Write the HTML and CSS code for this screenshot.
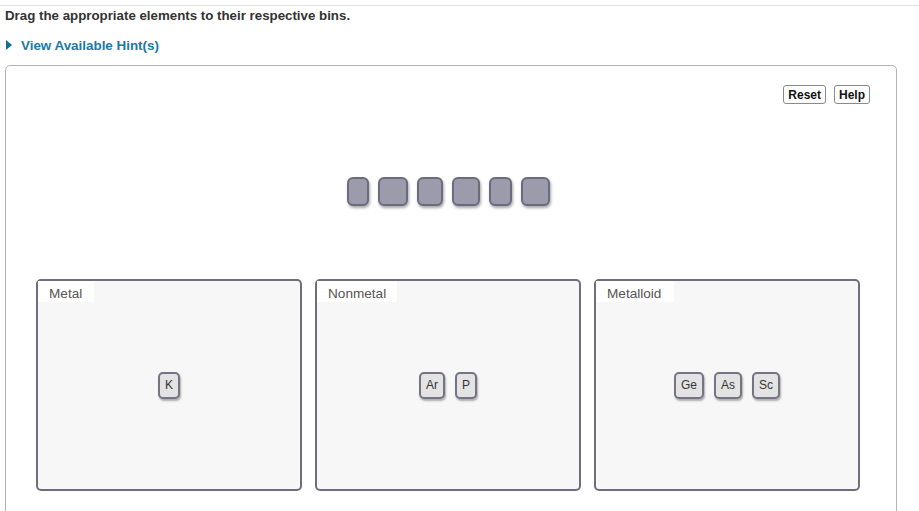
FILE: index.html
```html
<!DOCTYPE html>
<html>
<head>
<meta charset="utf-8">
<link rel="stylesheet" href="styles.css">
</head>
<body>
<div class="page">
  <div class="prompt">Drag the appropriate elements to their respective bins.</div>
  <div class="hint"><span class="tri"></span><span class="hint-text">View Available Hint(s)</span></div>
  <div class="panel">
    <div class="toolbar">
      <button class="btn">Reset</button>
      <button class="btn">Help</button>
    </div>
    <div class="tiles">
      <div class="tile w22"></div>
      <div class="tile w30"></div>
      <div class="tile w26"></div>
      <div class="tile w28"></div>
      <div class="tile w23"></div>
      <div class="tile w29"></div>
    </div>
    <div class="bins">
      <div class="bin">
        <div class="bin-label">Metal</div>
        <div class="chips"><span class="chip">K</span></div>
      </div>
      <div class="bin">
        <div class="bin-label">Nonmetal</div>
        <div class="chips"><span class="chip">Ar</span><span class="chip">P</span></div>
      </div>
      <div class="bin">
        <div class="bin-label">Metalloid</div>
        <div class="chips"><span class="chip">Ge</span><span class="chip">As</span><span class="chip">Sc</span></div>
      </div>
    </div>
  </div>
</div>
</body>
</html>
```
FILE: styles.css
```css
html, body {
  margin: 0;
  padding: 0;
  background: #fff;
  font-family: "Liberation Sans", Arial, sans-serif;
  overflow: hidden;
}
.page {
  margin-top: 5px;
  border-top: 1px solid #e2e2e2;
  height: 600px;
}
.prompt {
  padding-left: 5px;
  padding-top: 2px;
  font-size: 13.3px;
  font-weight: bold;
  color: #333;
  line-height: 16px;
}
.hint {
  display: flex;
  align-items: center;
  padding-left: 6px;
  margin-top: 13px;
  height: 16px;
}
.tri {
  width: 0;
  height: 0;
  border-top: 5px solid transparent;
  border-bottom: 5px solid transparent;
  border-left: 6px solid #0f6f96;
  margin-right: 9px;
}
.hint-text {
  font-size: 13.4px;
  font-weight: bold;
  color: #1a7aa3;
}
.panel {
  margin-left: 5px;
  margin-top: 12px;
  width: 890px;
  height: 500px;
  border: 1px solid #b3b3b3;
  border-radius: 5px;
}
.toolbar {
  display: flex;
  justify-content: flex-end;
  gap: 8px;
  padding: 19px 26px 0 0;
}
.btn {
  font-family: "Liberation Sans", Arial, sans-serif;
  font-size: 12px;
  font-weight: bold;
  color: #111;
  background: #fff;
  border: 1px solid #8a8a8a;
  border-radius: 3px;
  height: 19px;
  padding: 0 4px;
  line-height: 16px;
}
.tiles {
  display: flex;
  justify-content: center;
  gap: 9px;
  margin-top: 73px;
  padding-right: 6px;
}
.tile {
  height: 29px;
  box-sizing: border-box;
  background: #9b9bab;
  border: 2px solid #6b6b7d;
  border-radius: 6px;
  box-shadow: 1px 2px 3px rgba(0,0,0,0.35);
}
.w22 { width: 22px; }
.w30 { width: 30px; }
.w26 { width: 26px; }
.w28 { width: 28px; }
.w23 { width: 23px; }
.w29 { width: 29px; }
.bins {
  display: flex;
  gap: 13px;
  padding-left: 30px;
  margin-top: 73px;
}
.bin {
  width: 266px;
  height: 212px;
  box-sizing: border-box;
  background: #f7f7f7;
  border: 2px solid #6e6e7e;
  border-radius: 5px;
  display: grid;
}
.bin-label {
  grid-area: 1 / 1;
  align-self: start;
  justify-self: start;
  background: #fff;
  width: 45px;
  padding-left: 11px;
  height: 21px;
  line-height: 25px;
  font-size: 13.6px;
  color: #555;
  white-space: nowrap;
}
.bin:nth-child(2) .bin-label { width: 69px; }
.bin:nth-child(3) .bin-label { width: 67px; }
.chips {
  grid-area: 1 / 1;
  display: flex;
  justify-content: center;
  align-items: center;
  gap: 10px;
}
.chip {
  box-sizing: border-box;
  height: 27px;
  min-width: 21px;
  padding: 0 5px;
  display: flex;
  align-items: center;
  justify-content: center;
  font-size: 12px;
  color: #333;
  background: #e3e3e3;
  border: 2px solid #747484;
  border-radius: 5px;
  box-shadow: 1px 2px 2px rgba(0,0,0,0.3);
}
```
